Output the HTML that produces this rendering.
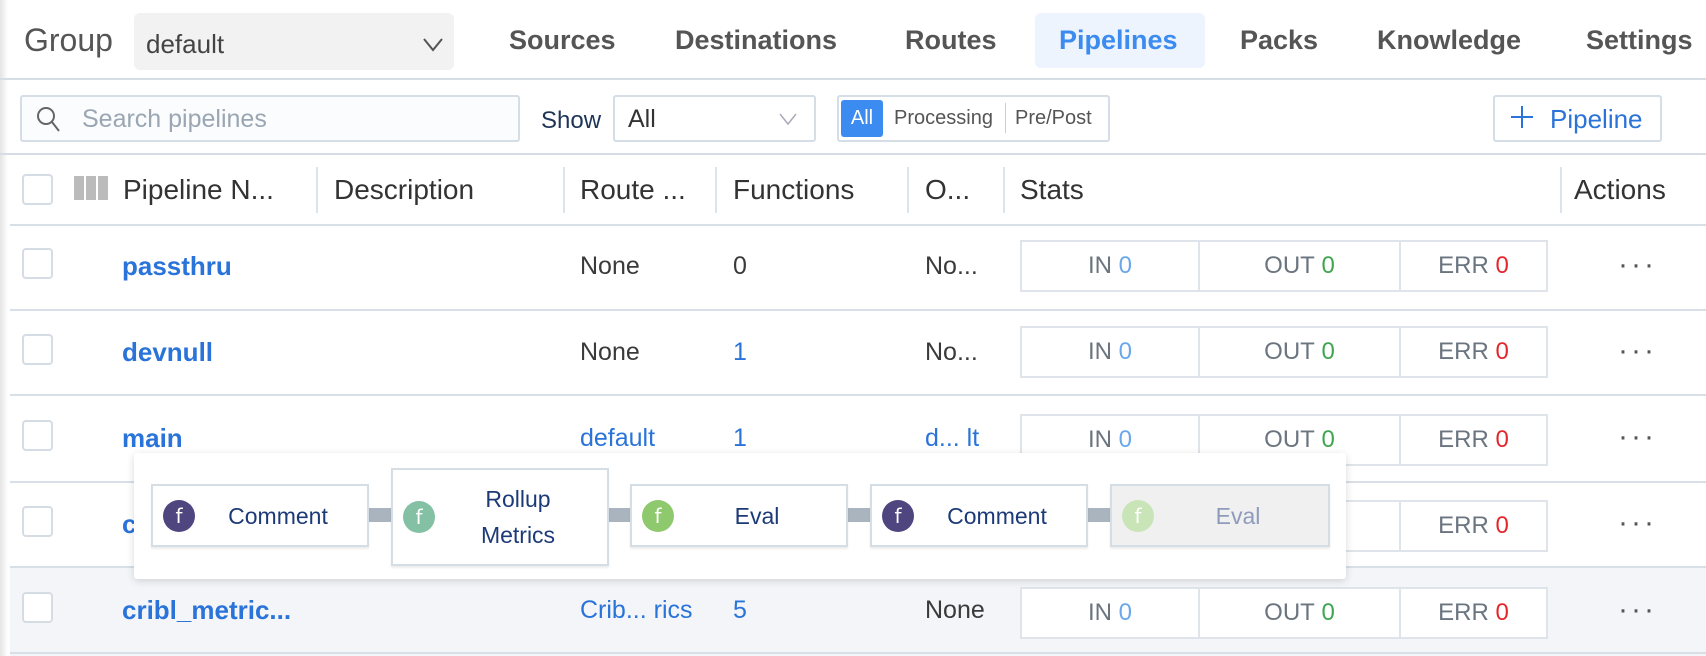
<!DOCTYPE html>
<html><head><meta charset="utf-8"><style>
*{box-sizing:border-box;margin:0;padding:0}
body{width:1706px;height:656px;overflow:hidden;background:#fff;font-family:"Liberation Sans",sans-serif;position:relative;color:#3a3a3a}
.a{position:absolute;white-space:nowrap}
.nav{font-size:27px;font-weight:bold;color:#555;top:25px}
.hd{font-size:28px;color:#333;top:174px}
.vd{position:absolute;width:2px;background:#dde3ea;top:167px;height:46px}
.hl{position:absolute;left:10px;right:0;height:2px;background:#d8dfe7}
.cb{position:absolute;left:22px;width:31px;height:31px;border:2px solid #d5dce4;border-radius:4px;background:#fff}
.cell{font-size:25px}
.lnk{color:#2a73d9}
.bold{font-weight:bold;font-size:26px;color:#2a73d9}
.stats{position:absolute;left:1020px;width:528px;height:52px;border:2px solid #dfe4ea;display:flex;font-size:24px;color:#6b7580;background:#fff}
.stats div{display:flex;align-items:center;justify-content:center;border-right:2px solid #dfe4ea}
.stats div:last-child{border-right:none}
.b{color:#6aa8ea}.g{color:#3fa54f}.r{color:#e5262c}
.dots{position:absolute;left:1618px;font-size:30px;color:#555;letter-spacing:3px}
.card{position:absolute;background:#fff;border:2px solid #d5dde5;box-shadow:0 2px 2px rgba(0,0,0,.08);font-size:23px;color:#1d3a78;display:flex;align-items:center;justify-content:center;text-align:center;line-height:36px}
.fi{position:absolute;left:10px;top:50%;margin-top:-16px;width:32px;height:32px;border-radius:50%;color:#fff;font-size:20px;display:flex;align-items:center;justify-content:center;font-family:"DejaVu Sans",sans-serif}
.con{position:absolute;height:14px;background:#aab4bf;top:508px}
</style></head><body>
<div class="a" style="left:0;top:0;width:8px;height:656px;background:linear-gradient(90deg,#e4e4e4,#fff)"></div>
<div class="a" style="left:24px;top:22px;font-size:32px;color:#555">Group</div>
<div class="a" style="left:134px;top:13px;width:320px;height:57px;background:#f2f2f2;border-radius:6px"></div>
<div class="a" style="left:146px;top:29px;font-size:26px;color:#444">default</div>
<svg class="a" style="left:422px;top:36px" width="22" height="16"><path d="M2 3 L11 14 L20 3" fill="none" stroke="#555" stroke-width="2"/></svg>
<div class="a" style="left:1035px;top:13px;width:170px;height:55px;background:#edf4fd;border-radius:6px"></div>
<div class="a nav" style="left:509px">Sources</div>
<div class="a nav" style="left:675px">Destinations</div>
<div class="a nav" style="left:905px">Routes</div>
<div class="a nav" style="left:1059px;color:#3b8bf0">Pipelines</div>
<div class="a nav" style="left:1240px">Packs</div>
<div class="a nav" style="left:1377px">Knowledge</div>
<div class="a nav" style="left:1586px">Settings</div>
<div class="hl" style="left:0;top:78px;background:#d6dde5"></div>
<!-- toolbar -->
<div class="a" style="left:20px;top:95px;width:500px;height:47px;border:2px solid #d5dde6;border-radius:3px;background:#fafcfe"></div>
<svg class="a" style="left:36px;top:106px" width="26" height="28"><circle cx="10" cy="10" r="8" fill="none" stroke="#666" stroke-width="2"/><path d="M16 16 L23 25" stroke="#666" stroke-width="2"/></svg>
<div class="a" style="left:82px;top:105px;font-size:25px;color:#9aa6b2">Search pipelines</div>
<div class="a" style="left:541px;top:107px;font-size:24px;color:#1e3557">Show</div>
<div class="a" style="left:613px;top:95px;width:203px;height:47px;border:2px solid #d5dde6;border-radius:3px"></div>
<div class="a" style="left:628px;top:105px;font-size:25px;color:#333">All</div>
<svg class="a" style="left:778px;top:112px" width="20" height="14"><path d="M2 2 L10 12 L18 2" fill="none" stroke="#aab" stroke-width="1.5"/></svg>
<div class="a" style="left:837px;top:95px;width:273px;height:47px;border:2px solid #d5dde6;border-radius:3px"></div>
<div class="a" style="left:841px;top:100px;width:42px;height:37px;background:#3b8bf0;border-radius:3px;color:#fff;font-size:20px;text-align:center;line-height:37px">All</div>
<div class="a" style="left:894px;top:107px;font-size:20px;color:#555">Processing</div>
<div class="a" style="left:1005px;top:103px;width:1px;height:30px;background:#ccc"></div>
<div class="a" style="left:1015px;top:107px;font-size:20px;color:#555">Pre/Post</div>
<div class="a" style="left:1493px;top:95px;width:169px;height:47px;border:2px solid #d5dde6;border-radius:3px"></div>
<svg class="a" style="left:1510px;top:105px" width="24" height="24"><path d="M12 1 V23 M1 12 H23" stroke="#2a73d9" stroke-width="2"/></svg>
<div class="a" style="left:1550px;top:104px;font-size:26px;color:#2a73d9">Pipeline</div>
<div class="hl" style="top:153px;left:0;background:#d6dde5"></div>
<!-- header -->
<div class="cb" style="top:174px"></div>
<div class="a" style="left:74px;top:176px;width:10px;height:24px;background:#bbb"></div>
<div class="a" style="left:86px;top:176px;width:10px;height:24px;background:#bbb"></div>
<div class="a" style="left:98px;top:176px;width:10px;height:24px;background:#bbb"></div>
<div class="a hd" style="left:123px">Pipeline N...</div>
<div class="vd" style="left:316px"></div>
<div class="a hd" style="left:334px">Description</div>
<div class="vd" style="left:563px"></div>
<div class="a hd" style="left:580px">Route ...</div>
<div class="vd" style="left:715px"></div>
<div class="a hd" style="left:733px">Functions</div>
<div class="vd" style="left:907px"></div>
<div class="a hd" style="left:925px">O...</div>
<div class="vd" style="left:1003px"></div>
<div class="a hd" style="left:1020px">Stats</div>
<div class="vd" style="left:1560px"></div>
<div class="a hd" style="left:1574px">Actions</div>
<div class="hl" style="top:224px"></div>
<!-- rows -->
<div class="a" style="left:10px;top:568px;width:1696px;height:88px;background:#f3f5f9"></div>
<div class="hl" style="top:309px"></div>
<div class="hl" style="top:394px"></div>
<div class="hl" style="top:481px"></div>
<div class="hl" style="top:566px"></div>
<div class="hl" style="top:652px"></div>

<div class="cb" style="top:248px"></div>
<div class="a bold" style="left:122px;top:251px">passthru</div>
<div class="a cell" style="left:580px;top:252px">None</div>
<div class="a cell" style="left:733px;top:252px">0</div>
<div class="a cell" style="left:925px;top:252px">No...</div>
<div class="stats" style="top:240px"><div style="width:178px">IN&nbsp;<span class="b">0</span></div><div style="width:201px">OUT&nbsp;<span class="g">0</span></div><div style="flex:1">ERR&nbsp;<span class="r">0</span></div></div>
<div class="dots" style="top:248px">···</div>

<div class="cb" style="top:334px"></div>
<div class="a bold" style="left:122px;top:337px">devnull</div>
<div class="a cell" style="left:580px;top:338px">None</div>
<div class="a cell lnk" style="left:733px;top:338px">1</div>
<div class="a cell" style="left:925px;top:338px">No...</div>
<div class="stats" style="top:326px"><div style="width:178px">IN&nbsp;<span class="b">0</span></div><div style="width:201px">OUT&nbsp;<span class="g">0</span></div><div style="flex:1">ERR&nbsp;<span class="r">0</span></div></div>
<div class="dots" style="top:334px">···</div>

<div class="cb" style="top:420px"></div>
<div class="a bold" style="left:122px;top:423px">main</div>
<div class="a cell lnk" style="left:580px;top:424px">default</div>
<div class="a cell lnk" style="left:733px;top:424px">1</div>
<div class="a cell lnk" style="left:925px;top:424px">d... lt</div>
<div class="stats" style="top:414px"><div style="width:178px">IN&nbsp;<span class="b">0</span></div><div style="width:201px">OUT&nbsp;<span class="g">0</span></div><div style="flex:1">ERR&nbsp;<span class="r">0</span></div></div>
<div class="dots" style="top:420px">···</div>

<div class="cb" style="top:506px"></div>
<div class="a bold" style="left:122px;top:509px">c</div>
<div class="stats" style="top:500px"><div style="width:178px">IN&nbsp;<span class="b">0</span></div><div style="width:201px">OUT&nbsp;<span class="g">0</span></div><div style="flex:1">ERR&nbsp;<span class="r">0</span></div></div>
<div class="dots" style="top:506px">···</div>

<div class="cb" style="top:592px"></div>
<div class="a bold" style="left:122px;top:595px">cribl_metric...</div>
<div class="a cell lnk" style="left:580px;top:596px">Crib... rics</div>
<div class="a cell lnk" style="left:733px;top:596px">5</div>
<div class="a cell" style="left:925px;top:596px">None</div>
<div class="stats" style="top:587px"><div style="width:178px">IN&nbsp;<span class="b">0</span></div><div style="width:201px">OUT&nbsp;<span class="g">0</span></div><div style="flex:1">ERR&nbsp;<span class="r">0</span></div></div>
<div class="dots" style="top:593px">···</div>

<!-- popup -->
<div class="a" style="left:134px;top:453px;width:1212px;height:126px;background:#fff;box-shadow:0 2px 8px rgba(0,0,0,.15);border-radius:3px"></div>
<div class="con" style="left:366px;width:28px"></div>
<div class="con" style="left:606px;width:28px"></div>
<div class="con" style="left:846px;width:28px"></div>
<div class="con" style="left:1086px;width:28px"></div>
<div class="card" style="left:151px;top:484px;width:218px;height:63px"><div class="fi" style="background:#4f4680">f</div><span style="margin-left:36px">Comment</span></div>
<div class="card" style="left:391px;top:468px;width:218px;height:98px"><div class="fi" style="background:#84c1a4">f</div><span style="margin-left:36px">Rollup<br>Metrics</span></div>
<div class="card" style="left:630px;top:484px;width:218px;height:63px"><div class="fi" style="background:#8fc96e">f</div><span style="margin-left:36px">Eval</span></div>
<div class="card" style="left:870px;top:484px;width:218px;height:63px"><div class="fi" style="background:#4f4680">f</div><span style="margin-left:36px">Comment</span></div>
<div class="card" style="left:1110px;top:484px;width:220px;height:63px;background:#f0f0f0;color:#8e9bbb"><div class="fi" style="background:#c9e5b8">f</div><span style="margin-left:36px">Eval</span></div>
</body></html>
